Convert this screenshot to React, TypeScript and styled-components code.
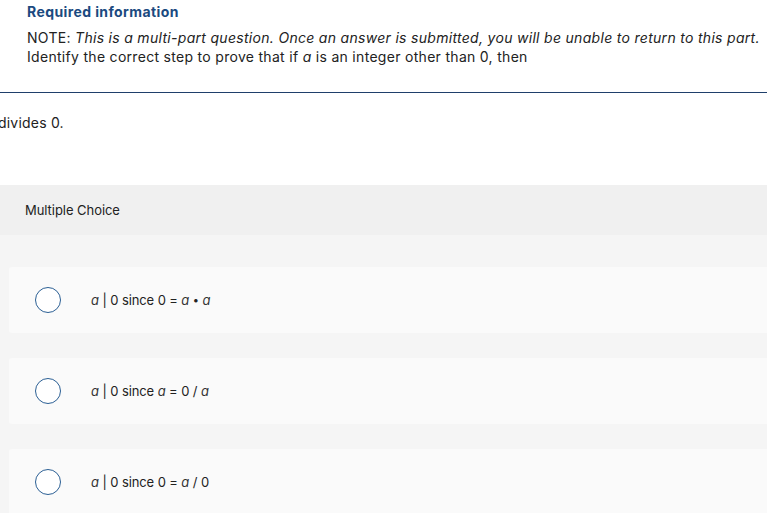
import React from 'react';
import styled, { createGlobalStyle } from 'styled-components';

// * global
const GlobalStyle = createGlobalStyle`
  html, body {
    margin: 0;
    padding: 0;
    background: #ffffff;
  }
  body {
    font-family: Inter, 'Liberation Sans', Arial, sans-serif;
    color: #222222;
    overflow: hidden;
  }
`;

// * type
type Choice = { id: string; content: React.ReactNode };

// * component
export default function App() {
  // 선택지 목록
  const choices: Choice[] = [
    {
      id: 'c1',
      content: (
        <>
          <i>a</i> | 0 since 0 = <i>a</i> <Dot>•</Dot> <i>a</i>
        </>
      )
    },
    {
      id: 'c2',
      content: (
        <>
          <i>a</i> | 0 since <i>a</i> = 0 / <i>a</i>
        </>
      )
    },
    {
      id: 'c3',
      content: (
        <>
          <i>a</i> | 0 since 0 = <i>a</i> / 0
        </>
      )
    }
  ];

  return (
    <>
      <GlobalStyle />
      <Page>
        <Header>
          <Title>Required information</Title>
          <Note>
            NOTE: <i>This is a multi-part question. Once an answer is submitted, you will be unable to return to this part.</i>
          </Note>
          <Note>
            Identify the correct step to prove that if <i>a</i> is an integer other than 0, then
          </Note>
        </Header>
        <Prompt>divides 0.</Prompt>
        <Band>Multiple Choice</Band>
        <ChoiceList>
          {choices.map((c) => (
            <ChoiceCard key={c.id}>
              <Radio />
              <ChoiceText>{c.content}</ChoiceText>
            </ChoiceCard>
          ))}
        </ChoiceList>
      </Page>
    </>
  );
}

// * styles
const Page = styled.div`
  width: 767px;
  height: 519px;
  display: flex;
  flex-direction: column;
`;
// 상단 안내
const Header = styled.div`
  padding: 2px 0 26px 27px;
  border-bottom: 1.5px solid #1f3f6b;
`;
const Title = styled.h3`
  margin: 0 0 7px;
  font-size: 14px;
  line-height: 19px;
  font-weight: 700;
  letter-spacing: 0.4px;
  color: #1b4a80;
`;
const Note = styled.p`
  margin: 0;
  font-size: 14px;
  line-height: 19px;
  letter-spacing: 0.3px;
  white-space: nowrap;
`;
const Prompt = styled.p`
  margin: 20px 0 0;
  text-indent: -2px;
  font-size: 14px;
  line-height: 19px;
  letter-spacing: 0.2px;
  height: 72px;
`;
// 문제 유형 띠
const Band = styled.div`
  height: 50px;
  display: flex;
  align-items: center;
  padding-left: 25px;
  background: #f0f0f0;
  font-size: 13px;
  letter-spacing: -0.05px;
`;
// 선택지
const ChoiceList = styled.div`
  height: 278px;
  overflow: hidden;
  background: #f5f5f5;
  padding: 32px 0 0 9px;
  display: flex;
  flex-direction: column;
  gap: 25px;
  box-sizing: border-box;
`;
const ChoiceCard = styled.div`
  flex: 0 0 66px;
  display: flex;
  align-items: center;
  padding-left: 26px;
  background: #fafafa;
  border-radius: 3px 0 0 3px;
`;
const Radio = styled.span`
  width: 24px;
  height: 24px;
  border: 1.5px solid #2b5f94;
  border-radius: 50%;
  background: #ffffff;
  flex-shrink: 0;
`;
const ChoiceText = styled.span`
  margin-left: 30px;
  font-size: 13px;
  letter-spacing: -0.1px;
  color: #222222;

  i {
    color: #333333;
  }
`;
const Dot = styled.span`
  font-size: 11px;
  vertical-align: 1px;
`;
